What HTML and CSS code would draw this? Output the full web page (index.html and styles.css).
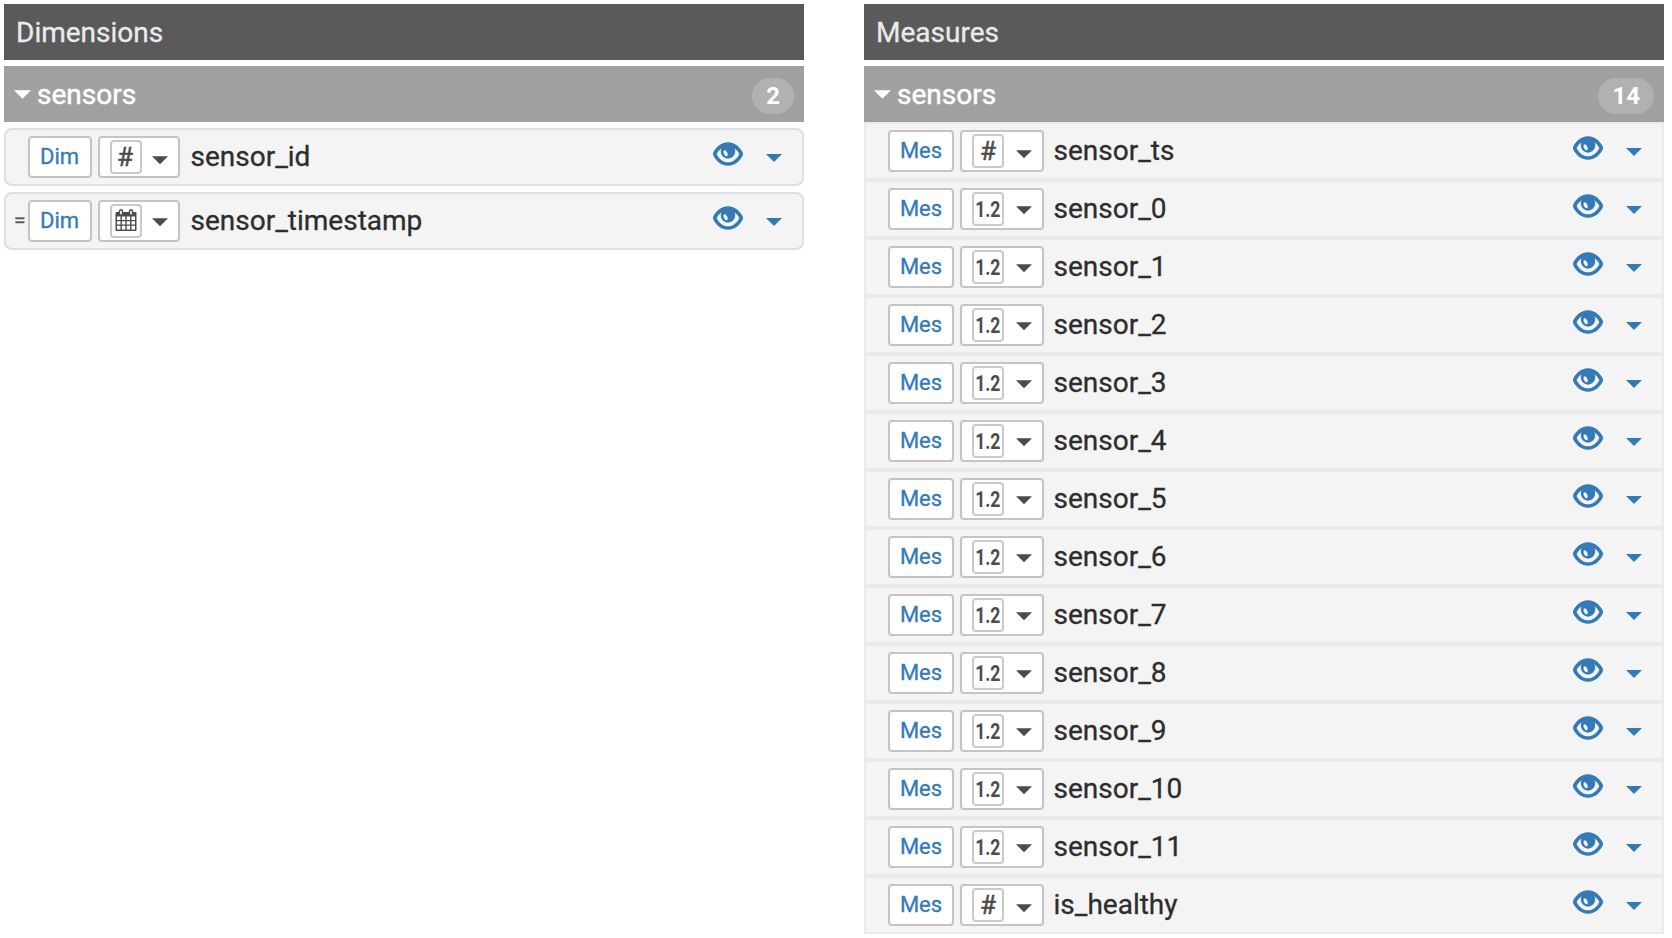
FILE: index.html
```html
<!DOCTYPE html>
<html lang="en">
<head>
<meta charset="utf-8">
<title>Fields</title>
<link rel="stylesheet" href="styles.css">
</head>
<body>
<svg class="defs" aria-hidden="true">
  <symbol id="eye" viewBox="0 0 30 24">
    <path fill-rule="evenodd" d="M15 0.3C7.8 0.3 2.5 5.8 0.2 10.6Q-0.3 12 0.2 13.2C2.500 18.2 7.800 23.700 15 23.700S27.500 18.200 29.800 13.200Q30.300 12 29.800 10.600C27.500 5.800 22.200 0.300 15 0.300ZM8.500 6.200Q5.300 8.600 3.600 11.900C6 17 10 20.200 15 20.200S24 17 26.400 11.900Q24.700 8.600 21.500 6.200Q22.200 7.700 22.200 9.500A7.200 7.200 0 0 1 7.800 9.500Q7.800 7.700 8.500 6.200Z"/>
    <ellipse class="glint" cx="12.600" cy="11.300" rx="1.700" ry="3.200" transform="rotate(-25 12.600 11.300)"/>
  </symbol>
  <symbol id="calendar" viewBox="0 0 22 22">
    <path fill-rule="evenodd" d="M1.500 3H20.500Q21.500 3 21.500 4V21Q21.500 22 20.500 22H1.500Q0.500 22 0.500 21V4Q0.500 3 1.500 3ZM2 7.500V11H5.500V7.500ZM6.900 7.500V11H10.300V7.500ZM11.700 7.500V11H15.100V7.500ZM16.500 7.500V11H20V7.500ZM2 12.200V15.500H5.500V12.200ZM6.900 12.200V15.500H10.300V12.200ZM11.700 12.200V15.500H15.100V12.200ZM16.500 12.200V15.500H20V12.200ZM2 16.700V20.500H5.500V16.700ZM6.900 16.700V20.500H10.300V16.700ZM11.700 16.700V20.500H15.100V16.700ZM16.500 16.700V20.500H20V16.700Z"/>
    <rect class="ring" x="4.500" y="0.700" width="3" height="5.500" rx="1.500"/>
    <rect class="ring" x="14.500" y="0.700" width="3" height="5.500" rx="1.500"/>
  </symbol>
  <symbol id="caret" viewBox="0 0 16 8"><path d="M0 0H16L8 8Z"/></symbol>
</svg>
<main class="fields">
  <section class="panel dimensions">
    <h2 class="panel-title">Dimensions</h2>
    <div class="group"><svg class="caret"><use href="#caret"/></svg><span class="group-name">sensors</span><span class="count">2</span></div>
    <div class="rows" id="dimensions"></div>
  </section>
  <section class="panel measures">
    <h2 class="panel-title">Measures</h2>
    <div class="group"><svg class="caret"><use href="#caret"/></svg><span class="group-name">sensors</span><span class="count">14</span></div>
    <div class="rows" id="measures"></div>
  </section>
</main>
<script src="fields.js"></script>
</body>
</html>
```
FILE: styles.css
```css
* { box-sizing: border-box; }
body { margin: 0; background: #fff; font-family: Roboto, sans-serif; }
.defs { position: absolute; width: 0; height: 0; }
.fields { display: flex; gap: 60px; padding: 4px; width: 1668px; height: 938px; }
.panel { width: 800px; flex: none; }
.panel-title { margin: 0 0 6px; height: 56px; padding-left: 12px; background: #5a5a5a; color: #ebebeb; font-size: 28px; font-weight: 400; line-height: 57px; -webkit-text-stroke: 0.3px #ebebeb; }
.group { display: flex; align-items: center; height: 56px; padding: 0 10px; background: #a0a0a0; color: #fff; font-size: 28px; line-height: 56px; }
.caret { display: block; width: 16px; height: 8px; flex: none; fill: currentColor; }
.group .caret { width: 17px; height: 9px; }
.group-name { margin-left: 6px; padding-top: 2px; -webkit-text-stroke: 0.5px #fff; }
.count { margin: 4px 0 0 auto; height: 36px; padding: 0 14px; border-radius: 18px; background: #b1b1b1; font-size: 24px; font-weight: 700; line-height: 36px; }
.row { display: flex; align-items: flex-start; height: 58px; padding: 6px 20px 0 0; border: 2px solid #eaeaea; background: #f4f4f4; }
.dimensions .row { margin-top: 6px; border-color: #dedede; border-radius: 8px; }
.mark { width: 22px; padding-left: 8px; color: #555; font-size: 21px; line-height: 41px; -webkit-text-stroke: 0.4px #555; }
.role, .type { height: 42px; border: 2px solid #c4c4c4; border-radius: 4px; background: #fff; }
.role { width: 64px; color: #337ab7; font-size: 22px; line-height: 37px; text-align: center; -webkit-text-stroke: 0.3px #337ab7; }
.dimensions .role { padding-right: 1px; }
.type { display: flex; width: 82px; margin-left: 6px; padding: 2px 0 0 10px; color: #4c4c4c; }
.dimensions .type { padding-left: 9.500px; }
.measures .role { width: 66px; }
.measures .type { width: 84px; }
.type-icon { display: flex; justify-content: center; flex: none; width: 32px; height: 34px; border: 2px solid #c9c9c9; border-radius: 4px; line-height: 31px; }
.hash { font-size: 26px; -webkit-text-stroke: 0.5px #4c4c4c; }
.dimensions .hash { padding-right: 1px; }
.decimal { font-size: 22px; font-weight: 700; }
.decimal span { display: block; transform: scaleX(0.8); }
.calendar { width: 22px; height: 22px; margin-top: 3px; flex: none; fill: #4c4c4c; }
.ring { fill: #fff; stroke: #4c4c4c; stroke-width: 1.4px; }
.type .caret { margin: 13.500px 0 0 10px; height: 8.500px; }
.measures .type .caret { margin-left: 12px; }
.type .hash + .caret { margin-top: 15.500px; }
.name { margin-left: 10.500px; color: #2d2d2d; font-size: 28px; line-height: 42px; -webkit-text-stroke: 0.3px #2d2d2d; }
.measures .name { margin-left: 9.500px; }
.eye { width: 30px; height: 24px; margin: 6px 23px 0 auto; fill: #337ab7; }
.glint { fill: #f4f4f4; }
.row > .caret { margin-top: 18px; color: #337ab7; }
```
FILE: fields.js
```
const TYPE_ICONS = {
  integer: '<span class="type-icon hash">#</span>',
  decimal: '<span class="type-icon decimal"><span>1.2</span></span>',
  date: '<span class="type-icon"><svg class="calendar"><use href="#calendar"/></svg></span>'
};
const caret = '<svg class="caret"><use href="#caret"/></svg>';

function row(role, field) {
  return `<div class="row"><span class="mark">${field.derived ? '=' : ''}</span><span class="role">${role}</span><span class="type">${TYPE_ICONS[field.type]}${caret}</span><span class="name">${field.name}</span><svg class="eye"><use href="#eye"/></svg>${caret}</div>`;
}

const dimensions = [
  { name: 'sensor_id', type: 'integer' },
  { name: 'sensor_timestamp', type: 'date', derived: true }
];
const measures = [
  { name: 'sensor_ts', type: 'integer' },
  ...Array.from({ length: 12 }, (_, i) => ({ name: `sensor_${i}`, type: 'decimal' })),
  { name: 'is_healthy', type: 'integer' }
];

document.getElementById('dimensions').innerHTML = dimensions.map(f => row('Dim', f)).join('');
document.getElementById('measures').innerHTML = measures.map(f => row('Mes', f)).join('');
```
